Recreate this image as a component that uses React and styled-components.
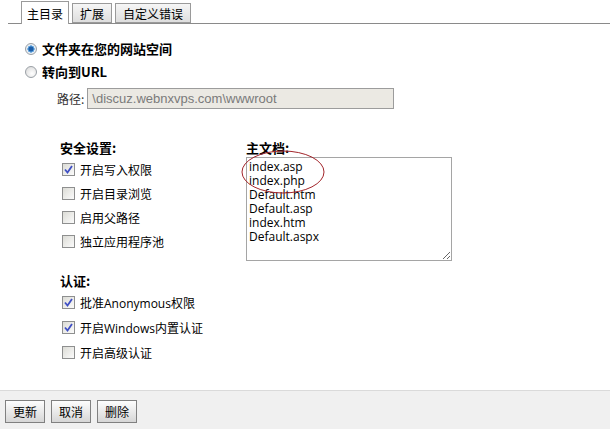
import React from "react";
import styled, { createGlobalStyle } from "styled-components";

const GlobalStyle = createGlobalStyle`
  body {
    margin: 0;
    background: #fff;
    font-family: "Open Sans", "Noto Sans CJK SC", sans-serif;
    font-size: 12px;
    color: #000;
  }
`;

const CN = `"Noto Sans CJK SC", "Open Sans", sans-serif`;

const Page = styled.div`
  height: 429px;
  display: flex;
  flex-direction: column;
  overflow: hidden;
`;

const TabBar = styled.div`
  display: flex;
  align-items: flex-end;
  gap: 3px;
  height: 22px;
  margin: 1px 0 0 8px;
  padding-left: 13px;
  border-bottom: 1px solid #8a8a8a;
`;

const Tab = styled.div`
  box-sizing: border-box;
  height: ${p => (p.$active ? "23px" : "20px")};
  margin-bottom: ${p => (p.$active ? "-1px" : "0")};
  padding: 0 ${p => (p.$active ? "5px" : "7px")};
  display: flex;
  align-items: center;
  font-family: ${CN};
  font-size: 12px;
  border: 1px solid #9a9a9a;
  border-bottom: ${p => (p.$active ? "none" : "1px solid #9a9a9a")};
  background: ${p =>
    p.$active ? "#fff" : "linear-gradient(#f6f6f6, #dedede)"};
`;

const Main = styled.div`
  flex: 1;
  padding: 13px 0 0 25px;
`;

const RadioRow = styled.label`
  display: flex;
  align-items: center;
  gap: 5px;
  height: 23px;
  font-family: ${CN};
  font-weight: bold;
  font-size: 13px;
`;

const Radio = styled.span`
  box-sizing: border-box;
  width: 12px;
  height: 12px;
  border-radius: 50%;
  border: 1px solid #9aa0a6;
  background: ${p =>
    p.$checked
      ? "radial-gradient(circle, #1f5fa8 0 2.2px, #5aa0dc 2.8px 3.4px, #e8eef4 3.8px)"
      : "radial-gradient(circle at 60% 65%, #ffffff, #d6d6d6)"};
`;

const PathRow = styled.div`
  display: flex;
  align-items: center;
  gap: 3px;
  margin: 5px 0 0 32px;
`;

const PathLabel = styled.span`
  font-family: ${CN};
  color: #333;
`;

const PathInput = styled.div`
  box-sizing: border-box;
  width: 307px;
  height: 21px;
  padding: 0 4px;
  display: flex;
  align-items: center;
  border: 1px solid #9c9c9c;
  background: #ebe9e3;
  color: #7a7a7a;
  font-family: "Liberation Sans", Arial, sans-serif;
  font-size: 13px;
`;

const Columns = styled.div`
  display: flex;
  margin: 30px 0 0 35px;
`;

const LeftCol = styled.div`
  width: 186px;
`;

const Heading = styled.div`
  font-family: ${CN};
  font-weight: bold;
  font-size: 13px;
  height: 18px;
  line-height: 18px;
  margin-top: ${p => p.$gap || "0"};
`;

const CheckRow = styled.label`
  display: flex;
  align-items: center;
  gap: 5px;
  height: ${p => p.$h || "24px"};
  padding-left: 2px;
`;

const Box = styled.span`
  box-sizing: border-box;
  width: 13px;
  height: 13px;
  border: 1px solid #8e8f8f;
  background: linear-gradient(135deg, #dcdcd6, #fbfbfb);
  display: flex;
  align-items: center;
  justify-content: center;
`;

const RightCol = styled.div`
  position: relative;
`;

const DocList = styled.textarea`
  box-sizing: border-box;
  width: 206px;
  height: 104px;
  margin: 0;
  padding: 2px 2px;
  border: 1px solid #a5a5a5;
  font-family: "Open Sans", sans-serif;
  font-size: 12px;
  line-height: 14px;
  color: #000;
  background: #fff;
  outline: none;
`;

const Mark = styled.svg`
  position: absolute;
  left: -6px;
  top: 10px;
  pointer-events: none;
`;

const Footer = styled.div`
  height: 39px;
  box-sizing: border-box;
  border-top: 1px solid #dadada;
  background: #f0f0f0;
  display: flex;
  align-items: flex-start;
  gap: 6px;
  padding: 9px 5px 0;
`;

const Button = styled.button`
  box-sizing: border-box;
  width: 40px;
  height: 23px;
  padding: 0;
  font-family: ${CN};
  font-size: 12px;
  color: #000;
  border: 1px solid #808080;
  background: linear-gradient(#fdfdfd, #e6e6e6 60%, #d6d6d6);
`;

const Label = styled.span`
  font-family: ${p => (p.$latin ? `"Open Sans", "Noto Sans CJK SC", sans-serif` : CN)};
`;

const Tick = () => (
  <svg width="9" height="9" viewBox="0 0 9 9">
    <path d="M1 4.5 L3.5 7.5 L8 1" fill="none" stroke="#3f4fc4" strokeWidth="1.8" />
  </svg>
);

const Check = ({ checked, children, h, latin }) => (
  <CheckRow $h={h}>
    <Box>{checked && <Tick />}</Box>
    <Label $latin={latin}>{children}</Label>
  </CheckRow>
);

const docs = [
  "index.asp",
  "index.php",
  "Default.htm",
  "Default.asp",
  "index.htm",
  "Default.aspx",
].join("\n");

export default function App() {
  return (
    <Page>
      <GlobalStyle />
      <TabBar>
        <Tab $active>主目录</Tab>
        <Tab>扩展</Tab>
        <Tab>自定义错误</Tab>
      </TabBar>
      <Main>
        <RadioRow>
          <Radio $checked />
          文件夹在您的网站空间
        </RadioRow>
        <RadioRow>
          <Radio />
          转向到URL
        </RadioRow>
        <PathRow>
          <PathLabel>路径:</PathLabel>
          <PathInput>\discuz.webnxvps.com\wwwroot</PathInput>
        </PathRow>
        <Columns>
          <LeftCol>
            <Heading>安全设置:</Heading>
            <Check checked>开启写入权限</Check>
            <Check>开启目录浏览</Check>
            <Check>启用父路径</Check>
            <Check>独立应用程序池</Check>
            <Heading $gap="19px">认证:</Heading>
            <Check checked latin h="25px">批准Anonymous权限</Check>
            <Check checked latin h="25px">开启Windows内置认证</Check>
            <Check h="25px">开启高级认证</Check>
          </LeftCol>
          <RightCol>
            <Heading>主文档:</Heading>
            <DocList readOnly value={docs} />
            <Mark width="90" height="48" viewBox="0 0 90 48">
              <ellipse cx="43" cy="23" rx="41" ry="21" fill="none" stroke="#a3262c" strokeWidth="1" />
            </Mark>
          </RightCol>
        </Columns>
      </Main>
      <Footer>
        <Button>更新</Button>
        <Button>取消</Button>
        <Button>删除</Button>
      </Footer>
    </Page>
  );
}
